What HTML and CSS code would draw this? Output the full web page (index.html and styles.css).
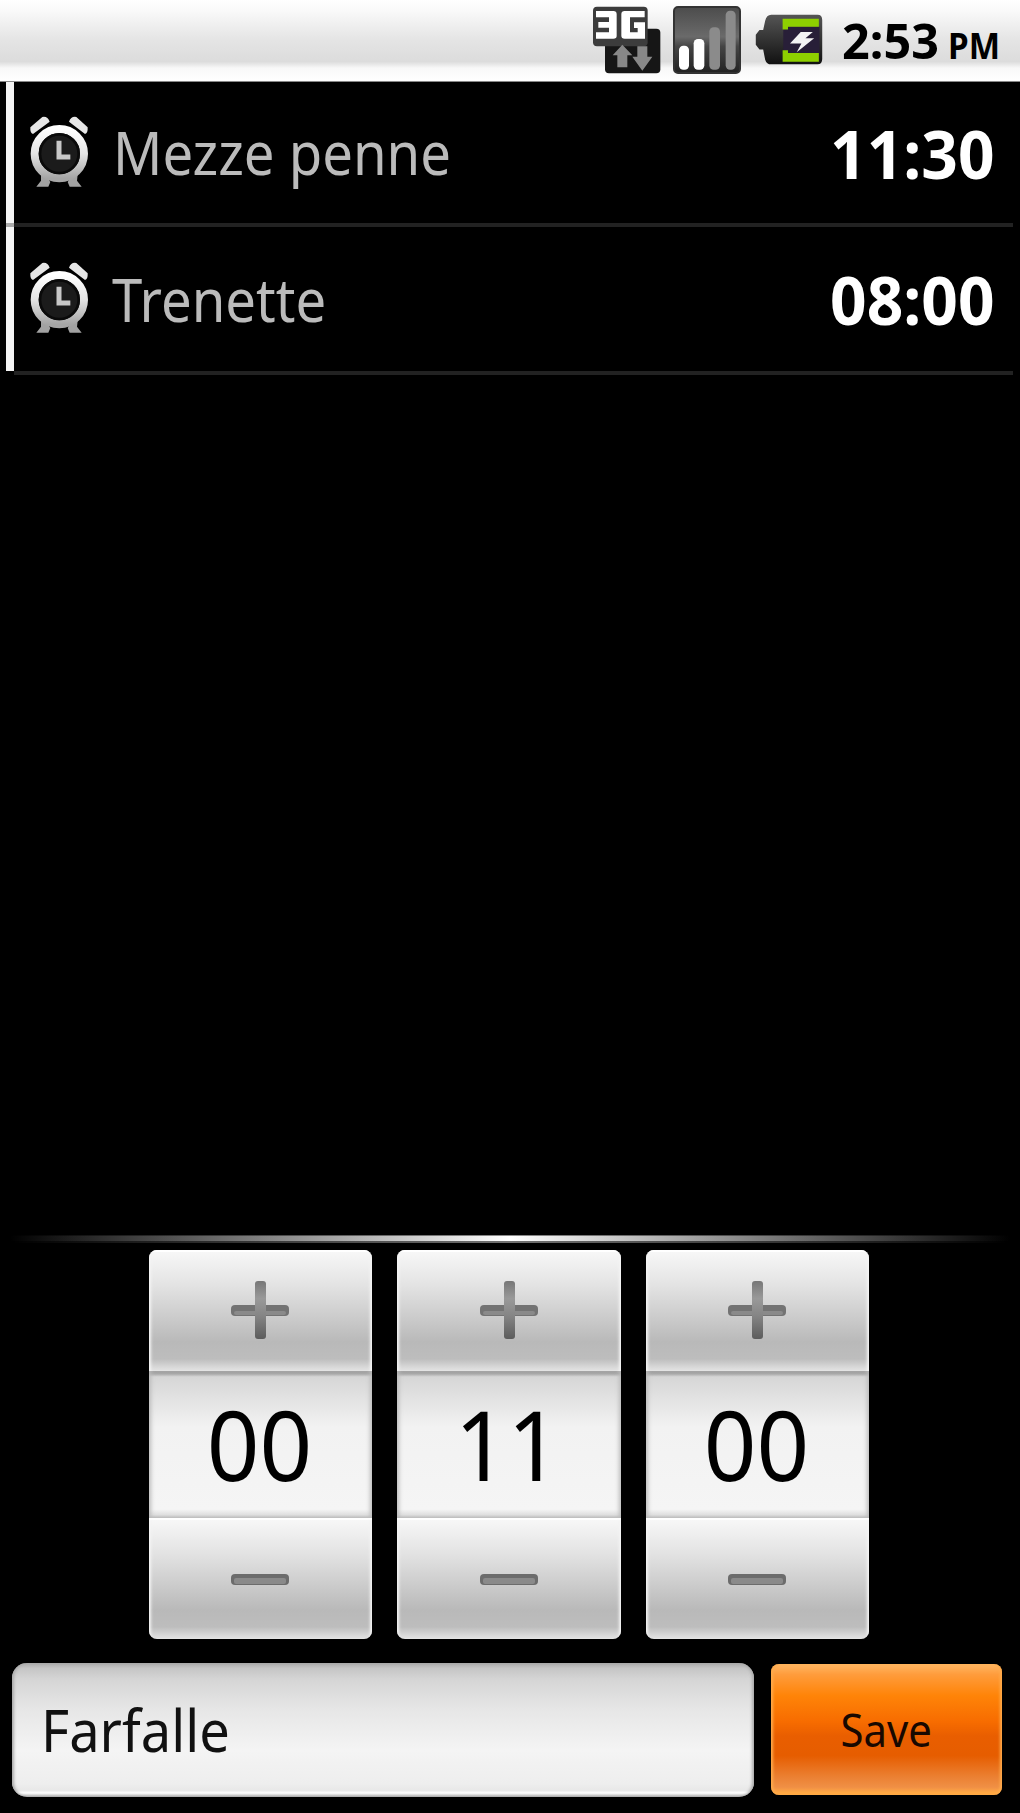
FILE: index.html
```html
<!DOCTYPE html>
<html lang="en">
<head>
<meta charset="utf-8">
<title>Pasta timer</title>
<link rel="stylesheet" href="styles.css">
</head>
<body>
<svg width="0" height="0" class="defs" aria-hidden="true">
  <defs>
    <linearGradient id="metal" x1="0" y1="0" x2="0" y2="1"><stop offset="0" stop-color="#fff"/><stop offset=".5" stop-color="#e4e4e4"/><stop offset="1" stop-color="#a5a5a5"/></linearGradient>
    <linearGradient id="dark" x1="0" y1="0" x2="0" y2="1"><stop offset="0" stop-color="#555"/><stop offset=".5" stop-color="#333"/><stop offset="1" stop-color="#111"/></linearGradient>
    <linearGradient id="signal" x1="0" y1="0" x2="0" y2="1"><stop offset="0" stop-color="#4c4c4c"/><stop offset=".45" stop-color="#6a6a6a"/><stop offset=".6" stop-color="#444"/><stop offset="1" stop-color="#222"/></linearGradient>
    <linearGradient id="sign" x1="0" y1="0" x2="0" y2="1"><stop offset="0" stop-color="#777"/><stop offset=".3" stop-color="#999"/><stop offset=".6" stop-color="#858585"/><stop offset="1" stop-color="#5c5c5c"/></linearGradient>
    <symbol id="alarm" viewBox="0 0 180 216">
      <path d="M36 176 L53 182 L64 198 L58 212 L22 212 L36 194ZM146 176 L127 182 L116 198 L122 212 L158 212 L144 194Z" fill="#a2a2a2"/>
      <circle cx="91" cy="113" r="73" fill="#1b1b1b"/>
      <circle cx="91" cy="113" r="74" fill="none" stroke="url(#metal)" stroke-width="24"/>
      <circle cx="91" cy="113" r="58" fill="none" stroke="#0a0a0a" stroke-width="8"/>
      <path d="M4 34 L40 3 Q56 0 62 17 L12 54 Q3 52 4 34ZM176 34 L142 3 Q126 0 120 17 L168 54 Q177 52 176 34Z" fill="#e6e6e6"/>
      <path d="M90 74V123H124" fill="none" stroke="#c8c8c8" stroke-width="15"/>
    </symbol>
    <symbol id="plus" viewBox="0 0 58 58">
      <rect x="0" y="24" width="58" height="11" rx="4" fill="#737373"/>
      <rect x="3" y="30" width="52" height="4" rx="2" fill="#8a8a8a"/>
      <rect x="24" y="0" width="11" height="58" rx="3" fill="url(#sign)"/>
    </symbol>
    <symbol id="minus" viewBox="0 0 58 58">
      <rect x="0" y="24" width="58" height="11" rx="4" fill="#6c6c6c"/>
      <rect x="3" y="28" width="52" height="6" rx="2" fill="#8a8a8a"/>
    </symbol>
  </defs>
</svg>
<div class="screen">
  <header class="status">
    <svg class="net" viewBox="0 0 207 204">
      <rect x="39" y="68" width="166" height="134" rx="12" fill="#161616"/>
      <rect x="3" y="2" width="164" height="119" rx="12" fill="#3c3c3c"/>
      <path d="M12 15H64Q74 15 74 25V90Q74 98 64 98H12V79H51V65H19V48H51V34H12ZM98 15H158V34H114V79H137V66H126V49H159V98H98Q88 98 88 89V25Q88 15 98 15Z" fill="#fff"/>
      <path d="M91 116L121 148H106V184H76V148H62ZM136 121H166V152H181L151 194L121 152H136Z" fill="#888"/>
    </svg>
    <svg class="bars" viewBox="0 0 204 204">
      <rect x="3" y="3" width="198" height="198" rx="12" fill="url(#signal)" stroke="#333" stroke-width="6"/>
      <rect x="18" y="119" width="30" height="72" rx="13" fill="#fff"/>
      <rect x="62" y="99" width="32" height="92" rx="13" fill="#fff"/>
      <rect x="109" y="64" width="32" height="127" rx="13" fill="#8b8b8b"/>
      <rect x="158" y="14" width="30" height="177" rx="13" fill="#8b8b8b"/>
    </svg>
    <svg class="battery" viewBox="0 0 202 152">
      <path d="M48 2H186Q200 2 200 18V134Q200 150 186 150H48Q34 150 30 136L24 106H13L2 92V62L13 48H24L30 20Q34 2 48 2Z" fill="url(#dark)"/>
      <rect x="84" y="38" width="108" height="80" fill="#281f38"/>
      <path d="M82 14H190V38H98V46H82ZM82 108H98V116H190V142H82Z" fill="#8ed000"/>
      <path d="M136 54H172L150 72H176L124 114L138 88H104Z" fill="#f4f4f4"/>
    </svg>
    <span class="clock">2:53</span><span class="meridiem">PM</span>
  </header>

  <main class="timers">
    <div class="timer">
      <svg class="alarm"><use href="#alarm"/></svg>
      <span class="name">Mezze penne</span><span class="time">11:30</span>
    </div>
    <div class="rule"></div>
    <div class="timer second">
      <svg class="alarm"><use href="#alarm"/></svg>
      <span class="name">Trenette</span><span class="time">08:00</span>
    </div>
    <div class="rule last"></div>
  </main>

  <div class="separator"></div>
  <section class="pickers">
    <div class="picker">
      <button class="step up"><svg><use href="#plus"/></svg></button>
      <div class="value"><span>00</span></div>
      <button class="step down"><svg><use href="#minus"/></svg></button>
    </div>
    <div class="picker">
      <button class="step up"><svg><use href="#plus"/></svg></button>
      <div class="value"><span>11</span></div>
      <button class="step down"><svg><use href="#minus"/></svg></button>
    </div>
    <div class="picker">
      <button class="step up"><svg><use href="#plus"/></svg></button>
      <div class="value"><span>00</span></div>
      <button class="step down"><svg><use href="#minus"/></svg></button>
    </div>
  </section>
  <footer class="entry">
    <div class="field"><span>Farfalle</span></div>
    <button class="save"><span>Save</span></button>
  </footer>
</div>
</body>
</html>
```
FILE: styles.css
```css
* { box-sizing: border-box; }
body { margin: 0; background: #000; font-family: "Noto Sans", "Open Sans", sans-serif; }
.defs { display: block; }
button { border: 0; padding: 0; margin: 0; font-family: inherit; }
span { display: inline-block; white-space: nowrap; }
.screen { width: 1020px; height: 1813px; display: flex; flex-direction: column; overflow: hidden; background: #000; }

.status { height: 82px; flex: none; display: flex; align-items: flex-start; padding: 6px 0 0 592px; border-bottom: 1px solid #888; background: linear-gradient(#fff 0, #fafafa 12%, #e4e4e4 50%, #dcdcdc 76%, #f8f8f8 84%, #fff 100%); color: #000; }
.net { width: 69px; height: 68px; }
.bars { width: 68px; height: 68px; margin-left: 12px; }
.battery { width: 68px; height: 51px; margin: 8px 0 0 14px; }
.clock, .meridiem { font-weight: 700; transform-origin: 0 0; line-height: 60px; }
.clock { width: 106px; margin: 4px 0 0 19px; font-size: 49px; transform: scaleX(.99); }
.meridiem { margin-top: 10px; font-size: 35px; transform: scaleX(.95); }

.timers { flex: none; height: 1153px; }
.timer { height: 141px; display: flex; align-items: center; margin-left: 6px; border-left: 8px solid #f4f4f4; padding: 0 25px 0 15px; }
.alarm { width: 60px; height: 72px; flex: none; margin-top: -2px; }
.name { margin: -1px 0 0 24px; color: #bbb; font-size: 60px; line-height: 80px; transform: scaleX(.908); transform-origin: 0 0; }
.time { margin-left: auto; color: #fff; font-size: 66px; font-weight: 700; line-height: 80px; transform: scaleX(.97); transform-origin: 100% 0; }
.second { height: 144px; }
.second .name { margin-left: 23px; }
.rule { height: 4px; margin: 0 7px 0 6px; border-left: 8px solid #aaa; background: #222; }
.rule.last { margin-left: 14px; border-left: 0; }

.separator { height: 8px; flex: none; background: linear-gradient(90deg, #000 1%, #fff 50%, #000 99%); border-bottom: 2px solid rgba(0, 0, 0, .55); border-top: 1px solid rgba(0, 0, 0, .45); }
.pickers { flex: none; display: flex; gap: 25px; margin: 7px 0 24px 148.5px; }
.picker { width: 223.5px; height: 389px; display: flex; flex-direction: column; border-radius: 8px; overflow: hidden; }
.step { height: 121px; display: flex; align-items: center; justify-content: center; background: linear-gradient(#f8f8f8 0, #e4e4e4 28%, #cdcdcd 54%, #b9b9b9 76%, #bdbdbd 90%, #ddd 98%); box-shadow: inset 0 2px 1px #fff, inset 3px 0 3px -1px #f4f4f4, inset -3px 0 3px -1px #f4f4f4; }
.step svg { width: 58px; height: 58px; }
.up svg { margin-bottom: 2px; }
.value { height: 147px; display: flex; align-items: center; justify-content: center; padding: 0 2px 4px 0; background: linear-gradient(#999 0, #aaa 2%, #d6d6d6 4%, #e0e0e0 16%, #f2f2f2 38%, #f5f5f5 94%, #ddd 98%, #bbb 100%); box-shadow: inset 4px 0 4px -2px #bbb, inset -4px 0 4px -2px #bbb; color: #000; }
.value span { font-size: 97px; line-height: 140px; transform: scaleX(.95); }

.entry { flex: none; display: flex; align-items: flex-start; gap: 17px; padding-left: 12px; }
.field { width: 742px; height: 134px; border-radius: 15px; display: flex; align-items: center; padding: 0 0 3px 29px; background: linear-gradient(#aaa 0, #c5c5c5 4%, #d5d5d5 12%, #e6e6e6 34%, #f4f4f4 65%, #eee 90%, #e8e8e8 95%, #fff 97%, #aaa 100%); box-shadow: inset 3px 0 3px -1px #aaa, inset -3px 0 3px -1px #aaa; color: #111; }
.field span { font-size: 59px; line-height: 80px; transform: scaleX(.92); transform-origin: 0 0; }
.save { width: 231px; height: 131px; margin-top: 1px; border-radius: 8px; display: flex; align-items: center; justify-content: center; padding-bottom: 2px; background: linear-gradient(#ffb764 0, #ff9c3c 8%, #ff8408 24%, #f76c00 44%, #e95e00 55%, #e65d00 70%, #eb8032 86%, #f08f45 94%, #ffa844 98%); box-shadow: inset 3px 0 3px -1px #ffac4c, inset -3px 0 3px -1px #ffac4c; color: #180800; }
.save span { font-size: 46px; line-height: 60px; transform: scaleX(.91); }
```
